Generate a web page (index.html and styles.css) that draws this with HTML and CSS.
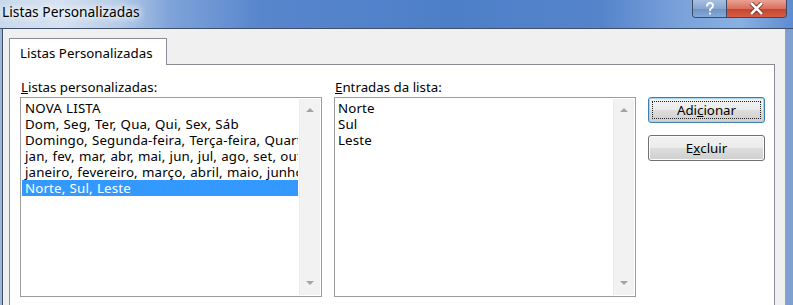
FILE: index.html
```html
<!DOCTYPE html>
<html lang="pt">
<head>
<meta charset="utf-8">
<title>Listas Personalizadas</title>
<link rel="stylesheet" href="styles.css">
</head>
<body>
<div class="window">
  <div class="titlebar">
    <div class="title">Listas Personalizadas</div>
    <div class="controls">
      <div class="ctl help">
        <svg width="10" height="14" viewBox="0 0 10 14"><path d="M2 4.5 C2 2 3.5 1 5 1 C7 1 8 2.3 8 3.8 C8 5.5 6.5 6 5.5 7 C5 7.5 5 8 5 9" fill="none" stroke="#f4f7fb" stroke-width="2"/><rect x="4" y="10.5" width="2" height="2" fill="#f4f7fb"/></svg>
      </div>
      <div class="ctl close">
        <svg width="15" height="13" viewBox="0 0 15 13"><path d="M2 1 L13 12 M13 1 L2 12" stroke="#6b2118" stroke-width="4.2"/><path d="M2 1 L13 12 M13 1 L2 12" stroke="#fff" stroke-width="2.6"/></svg>
      </div>
    </div>
  </div>
  <div class="client">
    <div class="tabs">
      <div class="tab">Listas Personalizadas</div>
    </div>
    <div class="panel">
      <div class="col">
        <div class="label"><u>L</u>istas personalizadas:</div>
        <div class="listbox">
          <div class="items">
            <div class="item">NOVA LISTA</div>
            <div class="item">Dom, Seg, Ter, Qua, Qui, Sex, Sáb</div>
            <div class="item">Domingo, Segunda-feira, Terça-feira, Quarta</div>
            <div class="item">jan, fev, mar, abr, mai, jun, jul, ago, set, out</div>
            <div class="item">janeiro, fevereiro, março, abril, maio, junho</div>
            <div class="item selected">Norte, Sul, Leste</div>
          </div>
          <div class="scrollbar">
            <span class="arrow up"></span>
            <span class="arrow down"></span>
          </div>
        </div>
      </div>
      <div class="col">
        <div class="label"><u>E</u>ntradas da lista:</div>
        <div class="listbox entries">
          <div class="items">
            <div class="item">Norte</div>
            <div class="item">Sul</div>
            <div class="item">Leste</div>
          </div>
          <div class="scrollbar">
            <span class="arrow up"></span>
            <span class="arrow down"></span>
          </div>
        </div>
      </div>
      <div class="buttons">
        <div class="btn focused"><span class="focus">Adi<u>c</u>ionar</span></div>
        <div class="btn">E<u>x</u>cluir</div>
      </div>
    </div>
  </div>
</div>
</body>
</html>
```
FILE: styles.css
```css
html, body {
  margin: 0;
  padding: 0;
}
body {
  width: 793px;
  height: 305px;
  overflow: hidden;
  font-family: "Noto Sans", "Open Sans", sans-serif;
  font-size: 13.3px;
  color: #000;
}
.window {
  display: flex;
  flex-direction: column;
  height: 305px;
  background: linear-gradient(90deg, #9fb6d8 0, #7e9fcf 100%);
}
.titlebar {
  height: 28px;
  flex: none;
  display: flex;
  justify-content: space-between;
  align-items: flex-start;
  background: linear-gradient(90deg, #c9d8ec 0, #d6e2f1 60px, #b5cbe8 120px, #7fa3d9 170px, #5886cd 260px, #4d7fc8 450px, #5584cb 600px, #7aa2da 680px, #8ab0e2 740px, #5e8cd0 793px);
  border-bottom: 1px solid #3d4f6b;
}
.title {
  padding: 3px 0 0 2px;
  font-size: 13.8px;
  line-height: 18px;
  text-shadow: 0 0 6px #fff, 0 0 8px #fff, 0 0 10px #e6eef8;
}
.controls {
  display: flex;
  margin-right: 6px;
  border: 1px solid #3b4a62;
  border-top: none;
  border-radius: 0 0 4px 4px;
  overflow: hidden;
  height: 17px;
}
.ctl {
  display: flex;
  align-items: center;
  justify-content: center;
  height: 17px;
}
.help {
  width: 33px;
  background: linear-gradient(180deg, #a7bfdf 0, #87a6d2 50%, #6f92c6 51%, #86a9d8 100%);
  border-right: 1px solid #3b4a62;
}
.close {
  width: 59px;
  background: linear-gradient(180deg, #e9a293 0, #d8705d 50%, #c8432c 51%, #d45d45 100%);
}
.client {
  flex: 1;
  margin: 0 7px 0 2px;
  background: #f0f0f0;
  border-left: 1px solid #3d4f6b;
  border-right: 1px solid #8da2c2;
  padding: 9px 10px 0 6px;
  display: flex;
  flex-direction: column;
}
.tabs {
  display: flex;
  position: relative;
  z-index: 1;
}
.tab {
  box-sizing: border-box;
  width: 158px;
  height: 27px;
  padding: 1px 0 0 10px;
  background: #fff;
  border: 1px solid #898c95;
  border-bottom: none;
  display: flex;
  align-items: center;
}
.panel {
  flex: 1;
  margin-top: -1px;
  background: #fff;
  border: 1px solid #898c95;
  border-bottom: none;
  display: flex;
  gap: 12px;
  padding: 14px 0 0 10px;
}
.col {
  width: 302px;
  display: flex;
  flex-direction: column;
}
.label {
  line-height: 17px;
  height: 18px;
  padding-left: 1px;
}
.listbox {
  height: 200px;
  box-sizing: border-box;
  border: 1px solid #9c9c9c;
  display: flex;
  background: #fff;
}
.items {
  flex: 1;
  min-width: 0;
  padding: 2px 1px 0 1px;
}
.item {
  height: 16px;
  line-height: 16px;
  white-space: nowrap;
  overflow: hidden;
  padding-left: 3px;
  letter-spacing: 0.15px;
  word-spacing: 0.6px;
}
.entries .item {
  padding-left: 2px;
}
.selected {
  background: #3399ff;
  color: #fff;
}
.scrollbar {
  width: 20px;
  margin: 1px 1px 1px 0;
  background: #f2f2f2;
  border-left: 1px solid #ececec;
  display: flex;
  flex-direction: column;
  justify-content: space-between;
  align-items: center;
  padding: 9px 0 10px;
}
.arrow {
  width: 0;
  height: 0;
  border-left: 4px solid transparent;
  border-right: 4px solid transparent;
}
.arrow.up {
  border-bottom: 4px solid #a3a3a3;
}
.arrow.down {
  border-top: 4px solid #a3a3a3;
}
.buttons {
  display: flex;
  flex-direction: column;
  gap: 12px;
  padding-top: 18px;
}
.btn {
  width: 117px;
  height: 26px;
  box-sizing: border-box;
  border: 1px solid #707070;
  border-radius: 3px;
  background: linear-gradient(180deg, #f2f2f2 0, #ebebeb 50%, #dddddd 51%, #cfcfcf 100%);
  display: flex;
  align-items: center;
  justify-content: center;
  box-shadow: inset 0 0 0 1px #fcfcfc;
}
.btn.focused {
  border-color: #3c7fb1;
  box-shadow: inset 0 0 0 1px #a8d4f0;
  padding: 3px;
}
.focus {
  flex: 1;
  align-self: stretch;
  display: flex;
  align-items: center;
  justify-content: center;
  outline: 1px dotted #222;
  outline-offset: -1px;
}
```
